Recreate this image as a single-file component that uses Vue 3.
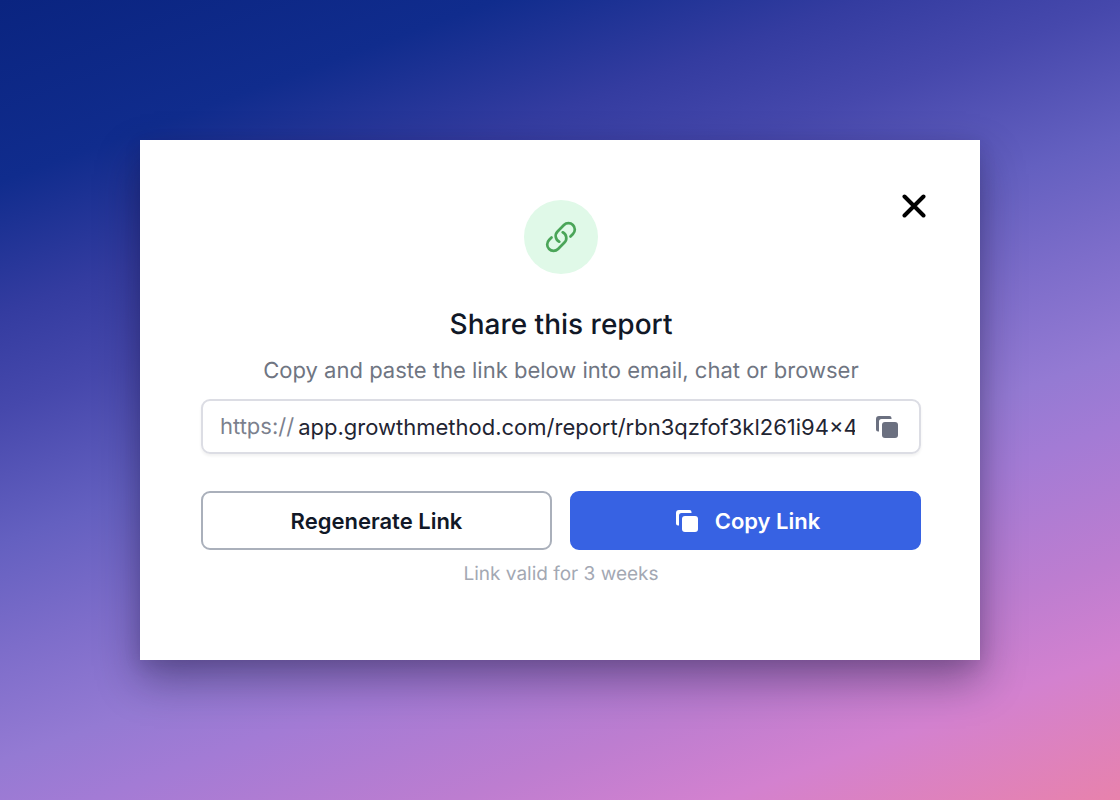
<script setup>
import { ref } from 'vue'

const address = ref('app.growthmethod.com/report/rbn3qzfof3kl261i94×4')
</script>

<template>
  <main class="backdrop">
    <section class="dialog" role="dialog" aria-labelledby="share-title">
      <button class="close" type="button" aria-label="Close">
        <svg width="24" height="24" viewBox="0 0 24 24" fill="none" stroke="currentColor" stroke-width="4" stroke-linecap="round">
          <path d="M2.5 2.5l19 19M21.5 2.5l-19 19" />
        </svg>
      </button>

      <div class="badge">
        <svg width="34" height="34" viewBox="0 0 24 24" fill="none" stroke="currentColor" stroke-width="1.9" stroke-linecap="round" stroke-linejoin="round">
          <path d="M13.19 8.688a4.5 4.5 0 0 1 1.242 7.244l-4.5 4.5a4.5 4.5 0 0 1-6.364-6.364l1.757-1.757m13.35-.622 1.757-1.757a4.5 4.5 0 0 0-6.364-6.364l-4.5 4.5a4.5 4.5 0 0 0 1.242 7.244" />
        </svg>
      </div>

      <h1 id="share-title">Share this report</h1>
      <label class="hint" for="share-link">Copy and paste the link below into email, chat or browser</label>

      <div class="field">
        <span class="scheme">https://</span>
        <input id="share-link" v-model="address" type="text" readonly />
        <button class="copy" type="button" aria-label="Copy">
          <svg width="24" height="24" viewBox="0 0 24 24" fill="currentColor">
            <path d="M4 1h10.500a2 2 0 0 1 2 2V4H6.5A2.5 2.5 0 0 0 4 6.500V16.500H3a2 2 0 0 1-2-2V4a3 3 0 0 1 3-3z" />
            <rect x="7" y="7" width="16" height="16" rx="3" />
          </svg>
        </button>
      </div>

      <div class="actions">
        <button class="action" type="button">Regenerate Link</button>
        <button class="action primary" type="button">
          <svg width="24" height="24" viewBox="0 0 24 24" fill="currentColor">
            <path d="M4 1h10.500a2 2 0 0 1 2 2V4H6.5A2.5 2.5 0 0 0 4 6.500V16.500H3a2 2 0 0 1-2-2V4a3 3 0 0 1 3-3z" />
            <rect x="7" y="7" width="16" height="16" rx="3" />
          </svg>
          Copy Link
        </button>
      </div>

      <p class="validity">Link valid for 3 weeks</p>
    </section>
  </main>
</template>

<style>
body {
  margin: 0;
}
</style>

<style scoped>
.backdrop {
  box-sizing: border-box;
  min-height: 100vh;
  display: flex;
  align-items: center;
  justify-content: center;
  font-family: Inter, "Liberation Sans", sans-serif;
  text-rendering: geometricPrecision;
  background: linear-gradient(160deg, #0a2480 0%, #102c8d 15%, #343ca0 26%, #4648ac 34%, #6460c0 45%, #7d6dca 54%, #947ad3 63%, #a37bd5 69%, #bd7dd0 80%, #d381cf 88%, #e882ac 100%);
}

.dialog {
  position: relative;
  box-sizing: border-box;
  width: 75%;
  min-width: 720px;
  padding: 60px 59px 72px 61px;
  display: flex;
  flex-direction: column;
  align-items: stretch;
  background: #fff;
  box-shadow: 0 20px 40px rgba(20, 15, 50, 0.4), 0 4px 16px rgba(20, 15, 50, 0.1);
}

button {
  font: inherit;
  color: inherit;
  margin: 0;
  padding: 0;
  border: 0;
  background: none;
  cursor: pointer;
}

svg {
  display: block;
  flex: none;
}

.close {
  position: absolute;
  top: 54px;
  right: 54px;
  color: #000;
}

.badge {
  width: 74px;
  height: 74px;
  align-self: center;
  display: flex;
  align-items: center;
  justify-content: center;
  border-radius: 50%;
  background: #e0f9e8;
  color: #4aa558;
}

h1 {
  margin: 30px 0 0;
  font-size: 28px;
  line-height: 40px;
  font-weight: 500;
  text-align: center;
  color: #111827;
}

.hint {
  margin-top: 11px;
  font-size: 22px;
  line-height: 32px;
  text-align: center;
  color: #6f7582;
}

.field {
  box-sizing: border-box;
  height: 55px;
  margin-top: 12px;
  padding: 0 20px 0 17px;
  display: flex;
  align-items: center;
  font-size: 22px;
  border: 2px solid #dcdde4;
  border-radius: 9px;
  box-shadow: 0 2px 3px rgba(0, 0, 0, 0.06);
}

.scheme {
  color: #7b808d;
}

.field input {
  flex: 1;
  min-width: 0;
  margin: 0 20px 0 4px;
  padding: 0;
  border: 0;
  outline: 0;
  font: inherit;
  color: #1f2533;
  background: none;
}

.copy {
  color: #6b7080;
}

.actions {
  margin-top: 37px;
  display: grid;
  grid-template-columns: 1fr 1fr;
  gap: 18px;
}

.action {
  box-sizing: border-box;
  height: 59px;
  display: flex;
  align-items: center;
  justify-content: center;
  gap: 16px;
  font-size: 22px;
  font-weight: 600;
  color: #111827;
  border: 2px solid #aab0bb;
  border-radius: 9px;
}

.primary {
  padding-left: 4px;
  color: #fff;
  border-color: #3762e3;
  background: #3762e3;
}

.validity {
  margin: 10px 0 0;
  font-size: 19px;
  line-height: 28px;
  text-align: center;
  color: #a3a8b3;
}
</style>
